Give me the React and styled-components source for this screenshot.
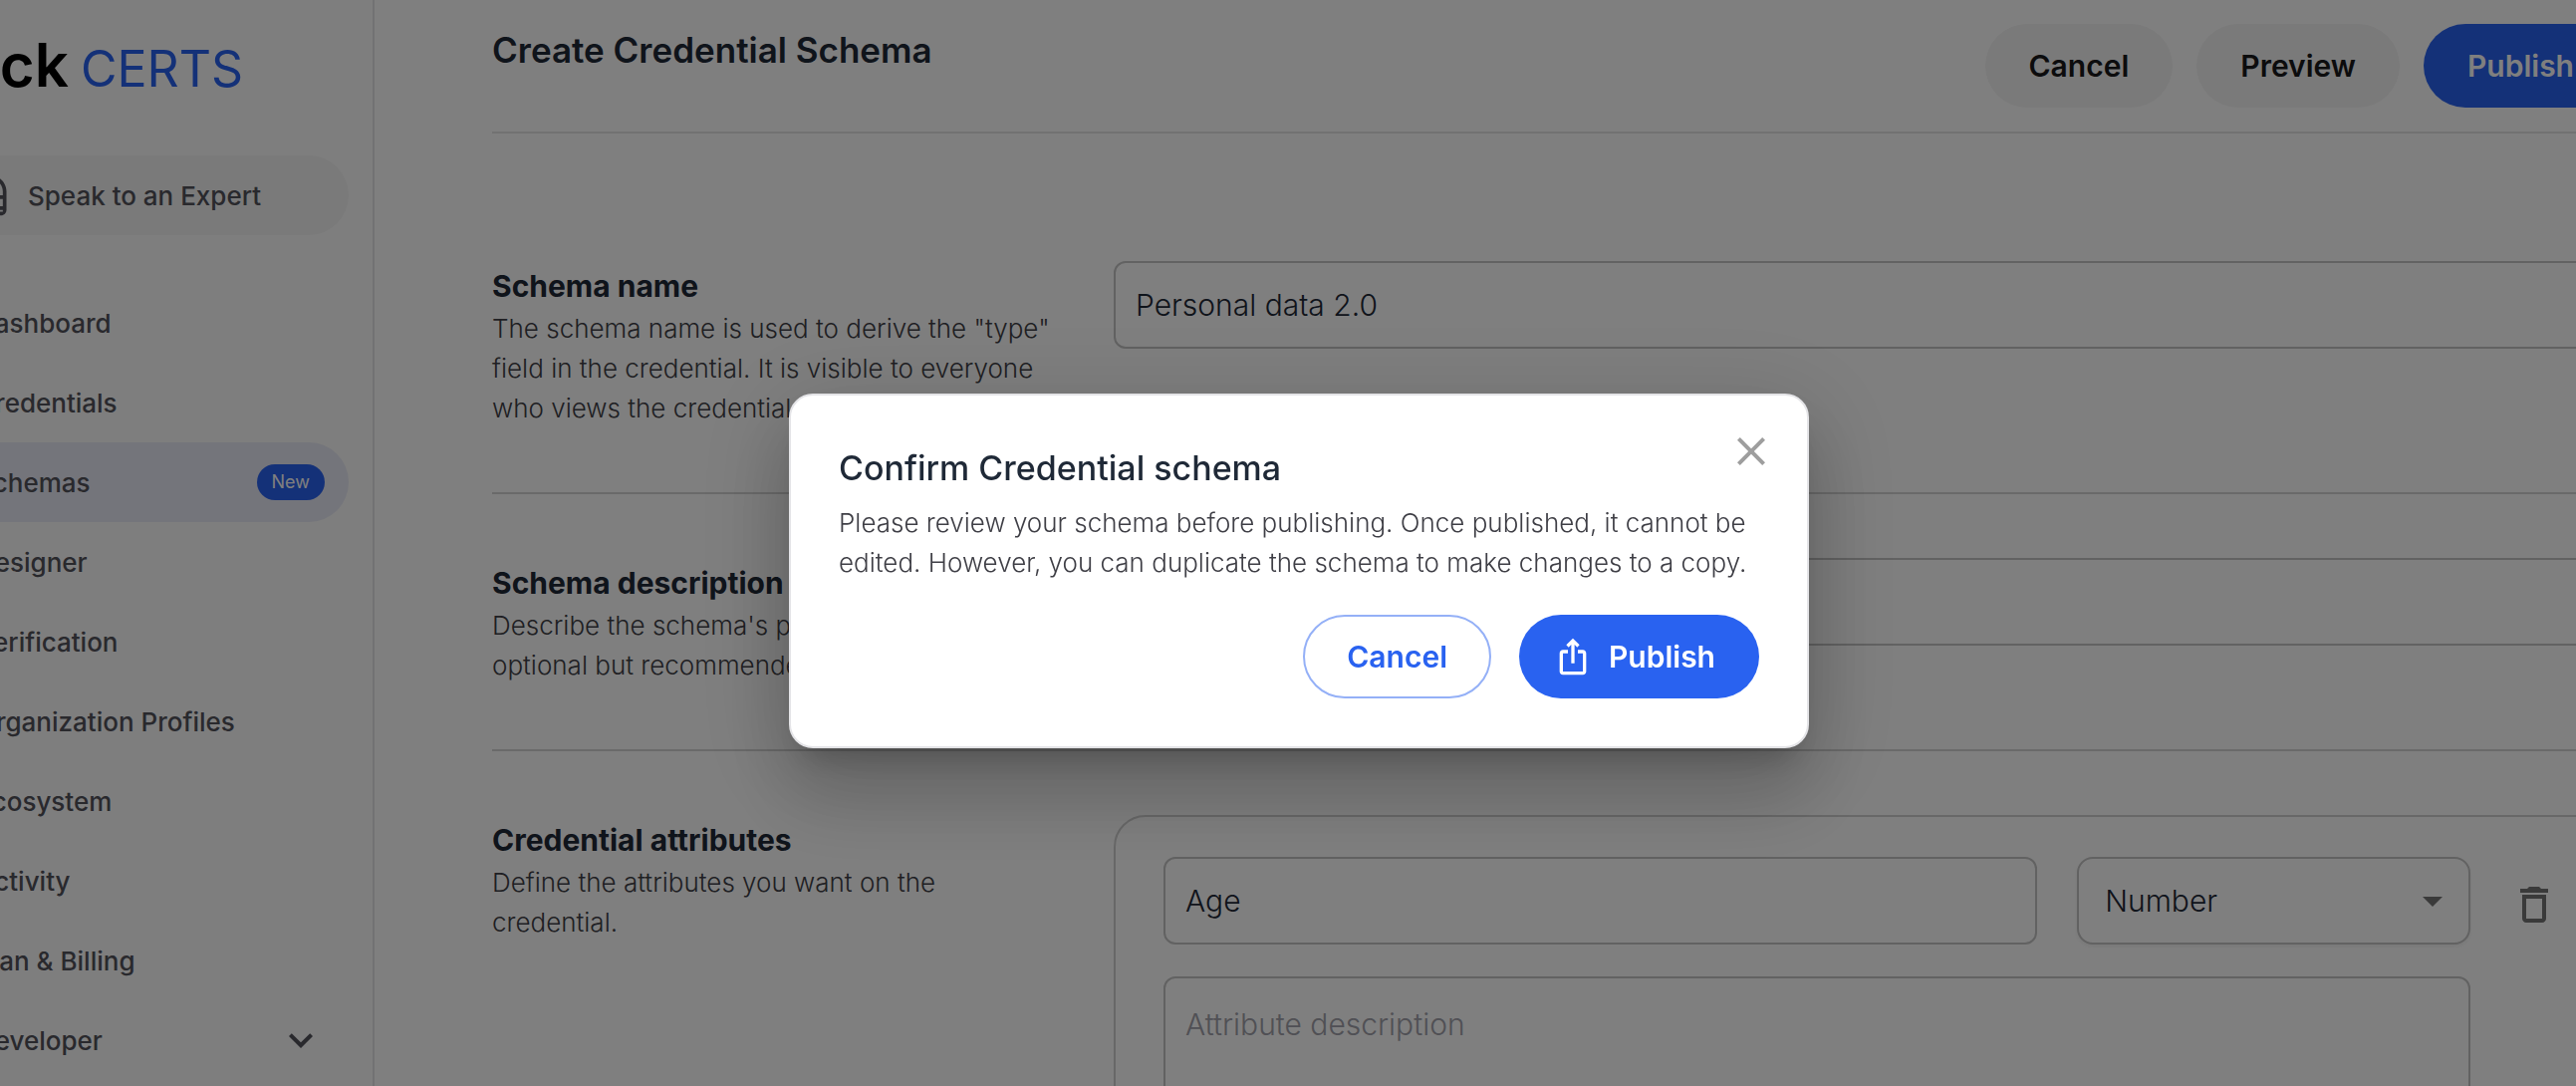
import React from 'react';
import styled, { createGlobalStyle, css } from 'styled-components';

const GlobalStyle = createGlobalStyle`
  *, *::before, *::after { box-sizing: border-box; }
  body {
    margin: 0;
    background: #ffffff;
    color: #1f2937;
    font-family: Inter, "Liberation Sans", sans-serif;
  }
  h1, h2, h3, p, ul { margin: 0; padding: 0; }
  button, input, textarea, select { font-family: inherit; }
`;

const Shell = styled.div`
  display: flex;
  height: 100vh;
  overflow: hidden;
`;

const Sidebar = styled.aside`
  flex: none;
  width: 426px;
  margin-left: -50px;
  padding-right: 24px;
  background: #fcfcfc;
  border-right: 2px solid #e4e4e7;
`;

const Logo = styled.a`
  display: flex;
  justify-content: flex-end;
  align-items: baseline;
  gap: 12px;
  height: 156px;
  padding: 28px 106px 0 0;
  line-height: 74px;
  text-decoration: none;
  white-space: nowrap;
`;

const LogoName = styled.span`
  color: #000000;
  font-size: 60px;
  font-weight: 600;
`;

const LogoProduct = styled.span`
  color: #2962f0;
  font-size: 50px;
`;

const sidebarRow = css`
  display: flex;
  align-items: center;
  height: 80px;
  border-radius: 40px;
  color: #52525b;
  font-size: 26px;
  font-weight: 500;
  text-decoration: none;
  white-space: nowrap;
`;

const ExpertLink = styled.a`
  ${sidebarRow}
  gap: 16px;
  padding-left: 18px;
  background: #f4f4f4;
`;

const Nav = styled.nav`
  margin-top: 48px;
`;

const NavList = styled.ul`
  list-style: none;
`;

const NavLink = styled.a`
  ${sidebarRow}
  justify-content: space-between;
  padding: 0 24px 0 26px;
  background: ${(p) => (p.$active ? '#e8eaf6' : 'transparent')};
`;

const Badge = styled.span`
  padding: 0 15px;
  border-radius: 18px;
  background: #2962f0;
  color: #ffffff;
  font-size: 18px;
  font-weight: 400;
  line-height: 36px;
`;

const Icon = styled.svg`
  flex: none;
  display: block;
  width: ${(p) => p.$size}px;
  height: ${(p) => p.$size}px;
  fill: currentColor;
`;

const Main = styled.main`
  flex: 1;
  min-width: 0;
  padding-left: 118px;
`;

const Content = styled.div`
  margin-right: -42px;
`;

const Header = styled.header`
  display: flex;
  justify-content: space-between;
  height: 134px;
  padding: 24px 0;
  border-bottom: 2px solid #e4e4e4;
`;

const PageTitle = styled.h1`
  font-size: 35px;
  font-weight: 600;
  line-height: 52px;
`;

const ButtonRow = styled.div`
  display: flex;
  justify-content: flex-end;
  gap: ${(p) => p.$gap}px;
`;

const Button = styled.button`
  display: flex;
  align-items: center;
  gap: 16px;
  height: 84px;
  padding: 0 42px;
  border: 2px solid transparent;
  border-radius: 42px;
  background: #f4f4f4;
  color: #18181b;
  font-size: 30px;
  font-weight: 600;
  ${(p) => p.$kind === 'primary' && css`
    background: #2962f0;
    color: #ffffff;
  `}
  ${(p) => p.$kind === 'outline' && css`
    border-color: #94b0f7;
    background: #ffffff;
    color: #2962f0;
  `}
  ${(p) => p.$withIcon && css`
    padding-left: 32px;
  `}
`;

const Section = styled.section`
  display: grid;
  grid-template-columns: 568px minmax(0, 1fr);
  gap: 56px;
  padding: 64px 0;
  border-bottom: 2px solid #d4d4d4;
  ${(p) => p.$first && css`margin-top: 64px;`}
`;

const SectionText = styled.div`
  padding-top: 4px;
`;

const SectionTitle = styled.h2`
  display: block;
  padding-bottom: 2px;
  font-size: 30px;
  font-weight: 700;
  line-height: 42px;
`;

const Description = styled.p`
  color: #3f3f46;
  font-size: 26px;
  font-weight: 350;
  line-height: 40px;
`;

const field = css`
  display: block;
  width: 100%;
  border: 2px solid #c4c4c4;
  border-radius: 12px;
  background: #ffffff;
  color: #1f2937;
  font-size: 30px;
  font-weight: 350;
`;

const TextField = styled.input`
  ${field}
  height: 88px;
  padding: 0 20px;
`;

const TextArea = styled.textarea`
  ${field}
  height: 220px;
  padding: 26px 20px;
  line-height: 40px;
  resize: none;
  &::placeholder { color: #a1a1aa; opacity: 1; }
`;

const AttributeCard = styled.div`
  display: flex;
  gap: 40px;
  min-height: 400px;
  padding: 40px 58px 40px 48px;
  border: 2px solid #d0d0d0;
  border-radius: 32px;
`;

const AttributeFields = styled.div`
  flex: 1;
  min-width: 0;
  display: grid;
  grid-template-columns: minmax(0, 20fr) minmax(0, 9fr);
  column-gap: 40px;
  row-gap: 32px;
  align-content: start;
`;

const FullRow = styled.div`
  grid-column: 1 / -1;
`;

const SelectWrap = styled.div`
  position: relative;
`;

const Select = styled.select`
  ${field}
  height: 88px;
  padding: 0 72px 0 26px;
  border-radius: 16px;
  box-shadow: 0 2px 4px rgba(0, 0, 0, 0.06);
  appearance: none;
`;

const SelectArrow = styled.span`
  position: absolute;
  top: 20px;
  right: 14px;
  color: #757575;
  pointer-events: none;
`;

const IconButton = styled.button`
  align-self: flex-start;
  padding: 0;
  border: 0;
  background: none;
  color: #757575;
`;

const DeleteButton = styled(IconButton)`
  margin-top: 24px;
`;

const Overlay = styled.div`
  position: fixed;
  inset: 0;
  display: flex;
  align-items: center;
  justify-content: center;
  padding: 56px 0 0 22px;
  background: rgba(0, 0, 0, 0.5);
`;

const Dialog = styled.div`
  position: relative;
  width: 1024px;
  padding: 48px;
  border: 2px solid #e4e4e7;
  border-radius: 24px;
  background: #ffffff;
  box-shadow:
    0 22px 30px -14px rgba(0, 0, 0, 0.2),
    0 48px 76px 6px rgba(0, 0, 0, 0.14),
    0 18px 92px 16px rgba(0, 0, 0, 0.12);
`;

const DialogTitle = styled.h3`
  margin-bottom: 10px;
  font-size: 34px;
  font-weight: 500;
  line-height: 50px;
`;

const DialogActions = styled.div`
  margin-top: 32px;
`;

const CloseButton = styled(IconButton)`
  position: absolute;
  top: 32px;
  right: 32px;
  color: #9e9e9e;
`;

const NAV_ITEMS = [
  { label: 'Dashboard' },
  { label: 'Credentials' },
  { label: 'Schemas', active: true, badge: 'New' },
  { label: 'Designer' },
  { label: 'Verification' },
  { label: 'Organization Profiles' },
  { label: 'Ecosystem' },
  { label: 'Activity' },
  { label: 'Plan & Billing' },
  { label: 'Developer', expandable: true },
];

const PATHS = {
  support: 'M19 14v4h-2v-4h2M7 14v4H6c-.55 0-1-.45-1-1v-3h2m5-13c-4.97 0-9 4.03-9 9v7c0 1.66 1.34 3 3 3h3v-8H5v-2c0-3.87 3.13-7 7-7s7 3.13 7 7v2h-4v8h4v1h-7v2h6c1.66 0 3-1.34 3-3V10c0-4.97-4.03-9-9-9z',
  chevron: 'M7.41 8.59 12 13.17l4.59-4.58L18 10l-6 6-6-6 1.41-1.41z',
  arrow: 'm7 10 5 5 5-5z',
  trash: 'M6 19c0 1.1.9 2 2 2h8c1.1 0 2-.9 2-2V7H6v12zM8 9h8v10H8V9zm7.5-5-1-1h-5l-1 1H5v2h14V4z',
  close: 'M19 6.41 17.59 5 12 10.59 6.41 5 5 6.41 10.59 12 5 17.59 6.41 19 12 13.41 17.59 19 19 17.59 13.41 12z',
  share: 'm16 5-1.42 1.42-1.59-1.59V16h-1.98V4.83L9.42 6.42 8 5l4-4 4 4zm4 5v11c0 1.1-.9 2-2 2H6c-1.11 0-2-.9-2-2V10c0-1.11.89-2 2-2h3v2H6v11h12V10h-3V8h3c1.1 0 2 .89 2 2z',
};

function Glyph({ name, size }) {
  return (
    <Icon $size={size} viewBox="0 0 24 24" aria-hidden="true">
      <path d={PATHS[name]} />
    </Icon>
  );
}

function SideNav() {
  return (
    <Sidebar>
      <Logo href="#home">
        <LogoName>Dock</LogoName>
        <LogoProduct>CERTS</LogoProduct>
      </Logo>
      <ExpertLink href="#expert">
        <Glyph name="support" size={44} />
        Speak to an Expert
      </ExpertLink>
      <Nav>
        <NavList>
          {NAV_ITEMS.map((item) => (
            <li key={item.label}>
              <NavLink href="#nav" $active={item.active}>
                {item.label}
                {item.badge && <Badge>{item.badge}</Badge>}
                {item.expandable && <Glyph name="chevron" size={48} />}
              </NavLink>
            </li>
          ))}
        </NavList>
      </Nav>
    </Sidebar>
  );
}

function SchemaForm() {
  return (
    <>
      <Section $first>
        <SectionText>
          <SectionTitle as="label" htmlFor="schema-name">Schema name</SectionTitle>
          <Description>
            The schema name is used to derive the "type" field in the credential. It is visible
            to everyone who views the credential.
          </Description>
        </SectionText>
        <TextField id="schema-name" defaultValue="Personal data 2.0" />
      </Section>
      <Section>
        <SectionText>
          <SectionTitle as="label" htmlFor="schema-description">Schema description</SectionTitle>
          <Description>
            Describe the schema's purpose. This is optional but recommended.
          </Description>
        </SectionText>
        <TextField id="schema-description" />
      </Section>
      <Section>
        <SectionText>
          <SectionTitle>Credential attributes</SectionTitle>
          <Description>Define the attributes you want on the credential.</Description>
        </SectionText>
        <AttributeCard>
          <AttributeFields>
            <TextField aria-label="Attribute name" defaultValue="Age" />
            <SelectWrap>
              <Select aria-label="Attribute type" defaultValue="Number">
                <option>Number</option>
              </Select>
              <SelectArrow>
                <Glyph name="arrow" size={48} />
              </SelectArrow>
            </SelectWrap>
            <FullRow>
              <TextArea aria-label="Attribute description" placeholder="Attribute description" />
            </FullRow>
          </AttributeFields>
          <DeleteButton type="button" aria-label="Delete attribute">
            <Glyph name="trash" size={48} />
          </DeleteButton>
        </AttributeCard>
      </Section>
    </>
  );
}

function ConfirmDialog() {
  return (
    <Overlay>
      <Dialog role="dialog" aria-modal="true" aria-labelledby="confirm-title">
        <DialogTitle id="confirm-title">Confirm Credential schema</DialogTitle>
        <Description>
          Please review your schema before publishing. Once published, it cannot be edited.
          However, you can duplicate the schema to make changes to a copy.
        </Description>
        <DialogActions>
          <ButtonRow $gap={28}>
            <Button type="button" $kind="outline">Cancel</Button>
            <Button type="button" $kind="primary" $withIcon>
              <Glyph name="share" size={40} />
              Publish
            </Button>
          </ButtonRow>
        </DialogActions>
        <CloseButton type="button" aria-label="Close">
          <Glyph name="close" size={48} />
        </CloseButton>
      </Dialog>
    </Overlay>
  );
}

export default function App() {
  return (
    <>
      <GlobalStyle />
      <Shell>
        <SideNav />
        <Main>
          <Content>
            <Header>
              <PageTitle>Create Credential Schema</PageTitle>
              <ButtonRow $gap={24}>
                <Button type="button">Cancel</Button>
                <Button type="button">Preview</Button>
                <Button type="button" $kind="primary">Publish</Button>
              </ButtonRow>
            </Header>
            <SchemaForm />
          </Content>
        </Main>
      </Shell>
      <ConfirmDialog />
    </>
  );
}
